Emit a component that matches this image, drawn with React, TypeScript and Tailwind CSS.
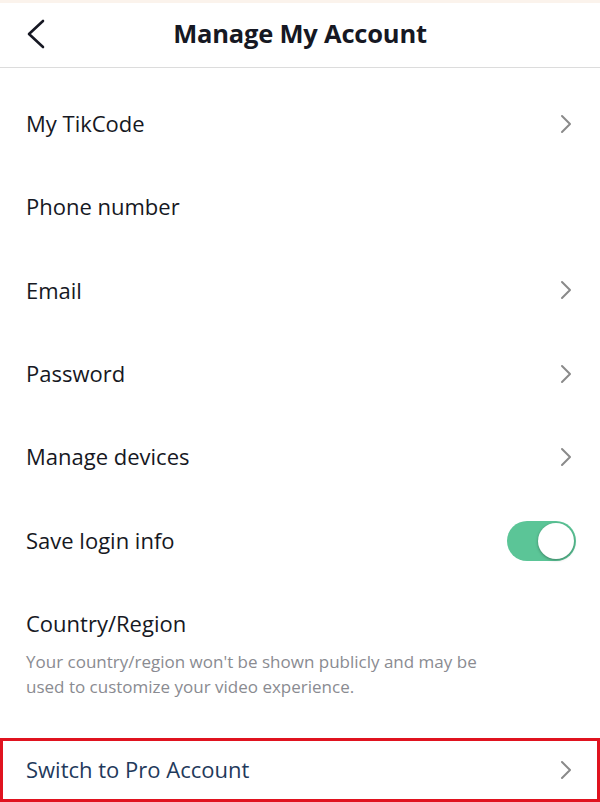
const rows = [
    { label: 'My TikCode', arrow: true },
    { label: 'Phone number', arrow: false },
    { label: 'Email', arrow: true },
    { label: 'Password', arrow: true },
    { label: 'Manage devices', arrow: true },
];

function Chevron() {
    return (
        <svg width="14" height="20" viewBox="0 0 14 20" fill="none" className="text-[#8a8a8a]">
            <path d="M3 2 L11 10 L3 18" stroke="currentColor" strokeWidth="2" strokeLinecap="round" strokeLinejoin="round" />
        </svg>
    );
}

export default function App() {
    return (
        <div className="w-[600px] h-[802px] bg-white overflow-hidden font-['Open_Sans',sans-serif] text-[#161823]">
            <div className="h-[3px] bg-[#fbf3ec]" />
            <header className="relative h-[65px] flex items-center justify-center border-b border-[#dcdcdc]">
                <svg width="22" height="30" viewBox="0 0 22 30" fill="none" className="absolute left-[25px] top-[16px]">
                    <path d="M18 2 L4 15 L18 28" stroke="#161823" strokeWidth="2.6" strokeLinecap="round" strokeLinejoin="round" />
                </svg>
                <h1 className="-mt-[4px] text-[25.5px] font-bold tracking-[-0.2px]">Manage My Account</h1>
            </header>

            <div className="pt-[14px]">
                {rows.map((r) => (
                    <div key={r.label} className="h-[83.3px] flex items-center justify-between pl-[26px] pr-[27px]">
                        <span className="text-[22px]">{r.label}</span>
                        {r.arrow && <Chevron />}
                    </div>
                ))}
                <div className="h-[83.3px] flex items-center justify-between pl-[26px] pr-[24px]">
                    <span className="text-[22px]">Save login info</span>
                    <div className="mt-[1px] w-[69px] h-[40px] rounded-full bg-[#5bc597] flex items-center justify-end pr-[2px]">
                        <div className="w-[36px] h-[36px] rounded-full bg-white shadow-[0_1px_3px_rgba(0,0,0,0.35)]" />
                    </div>
                </div>
                <div className="pl-[26px] pr-[24px] pt-[27px]">
                    <div className="text-[22px] leading-[28px]">Country/Region</div>
                    <p className="mt-[12px] w-[480px] text-[17px] leading-[25px] text-[#8a8b91]">
                        Your country/region won't be shown publicly and may be used to customize your video experience.
                    </p>
                </div>
            </div>

            <div className="mt-[39px] h-[64px] border-[3px] border-[#e0131f] flex items-center justify-between pl-[23px] pr-[24px]">
                <span className="text-[22px] text-[#1f3a5c]">Switch to Pro Account</span>
                <Chevron />
            </div>
        </div>
    );
}
